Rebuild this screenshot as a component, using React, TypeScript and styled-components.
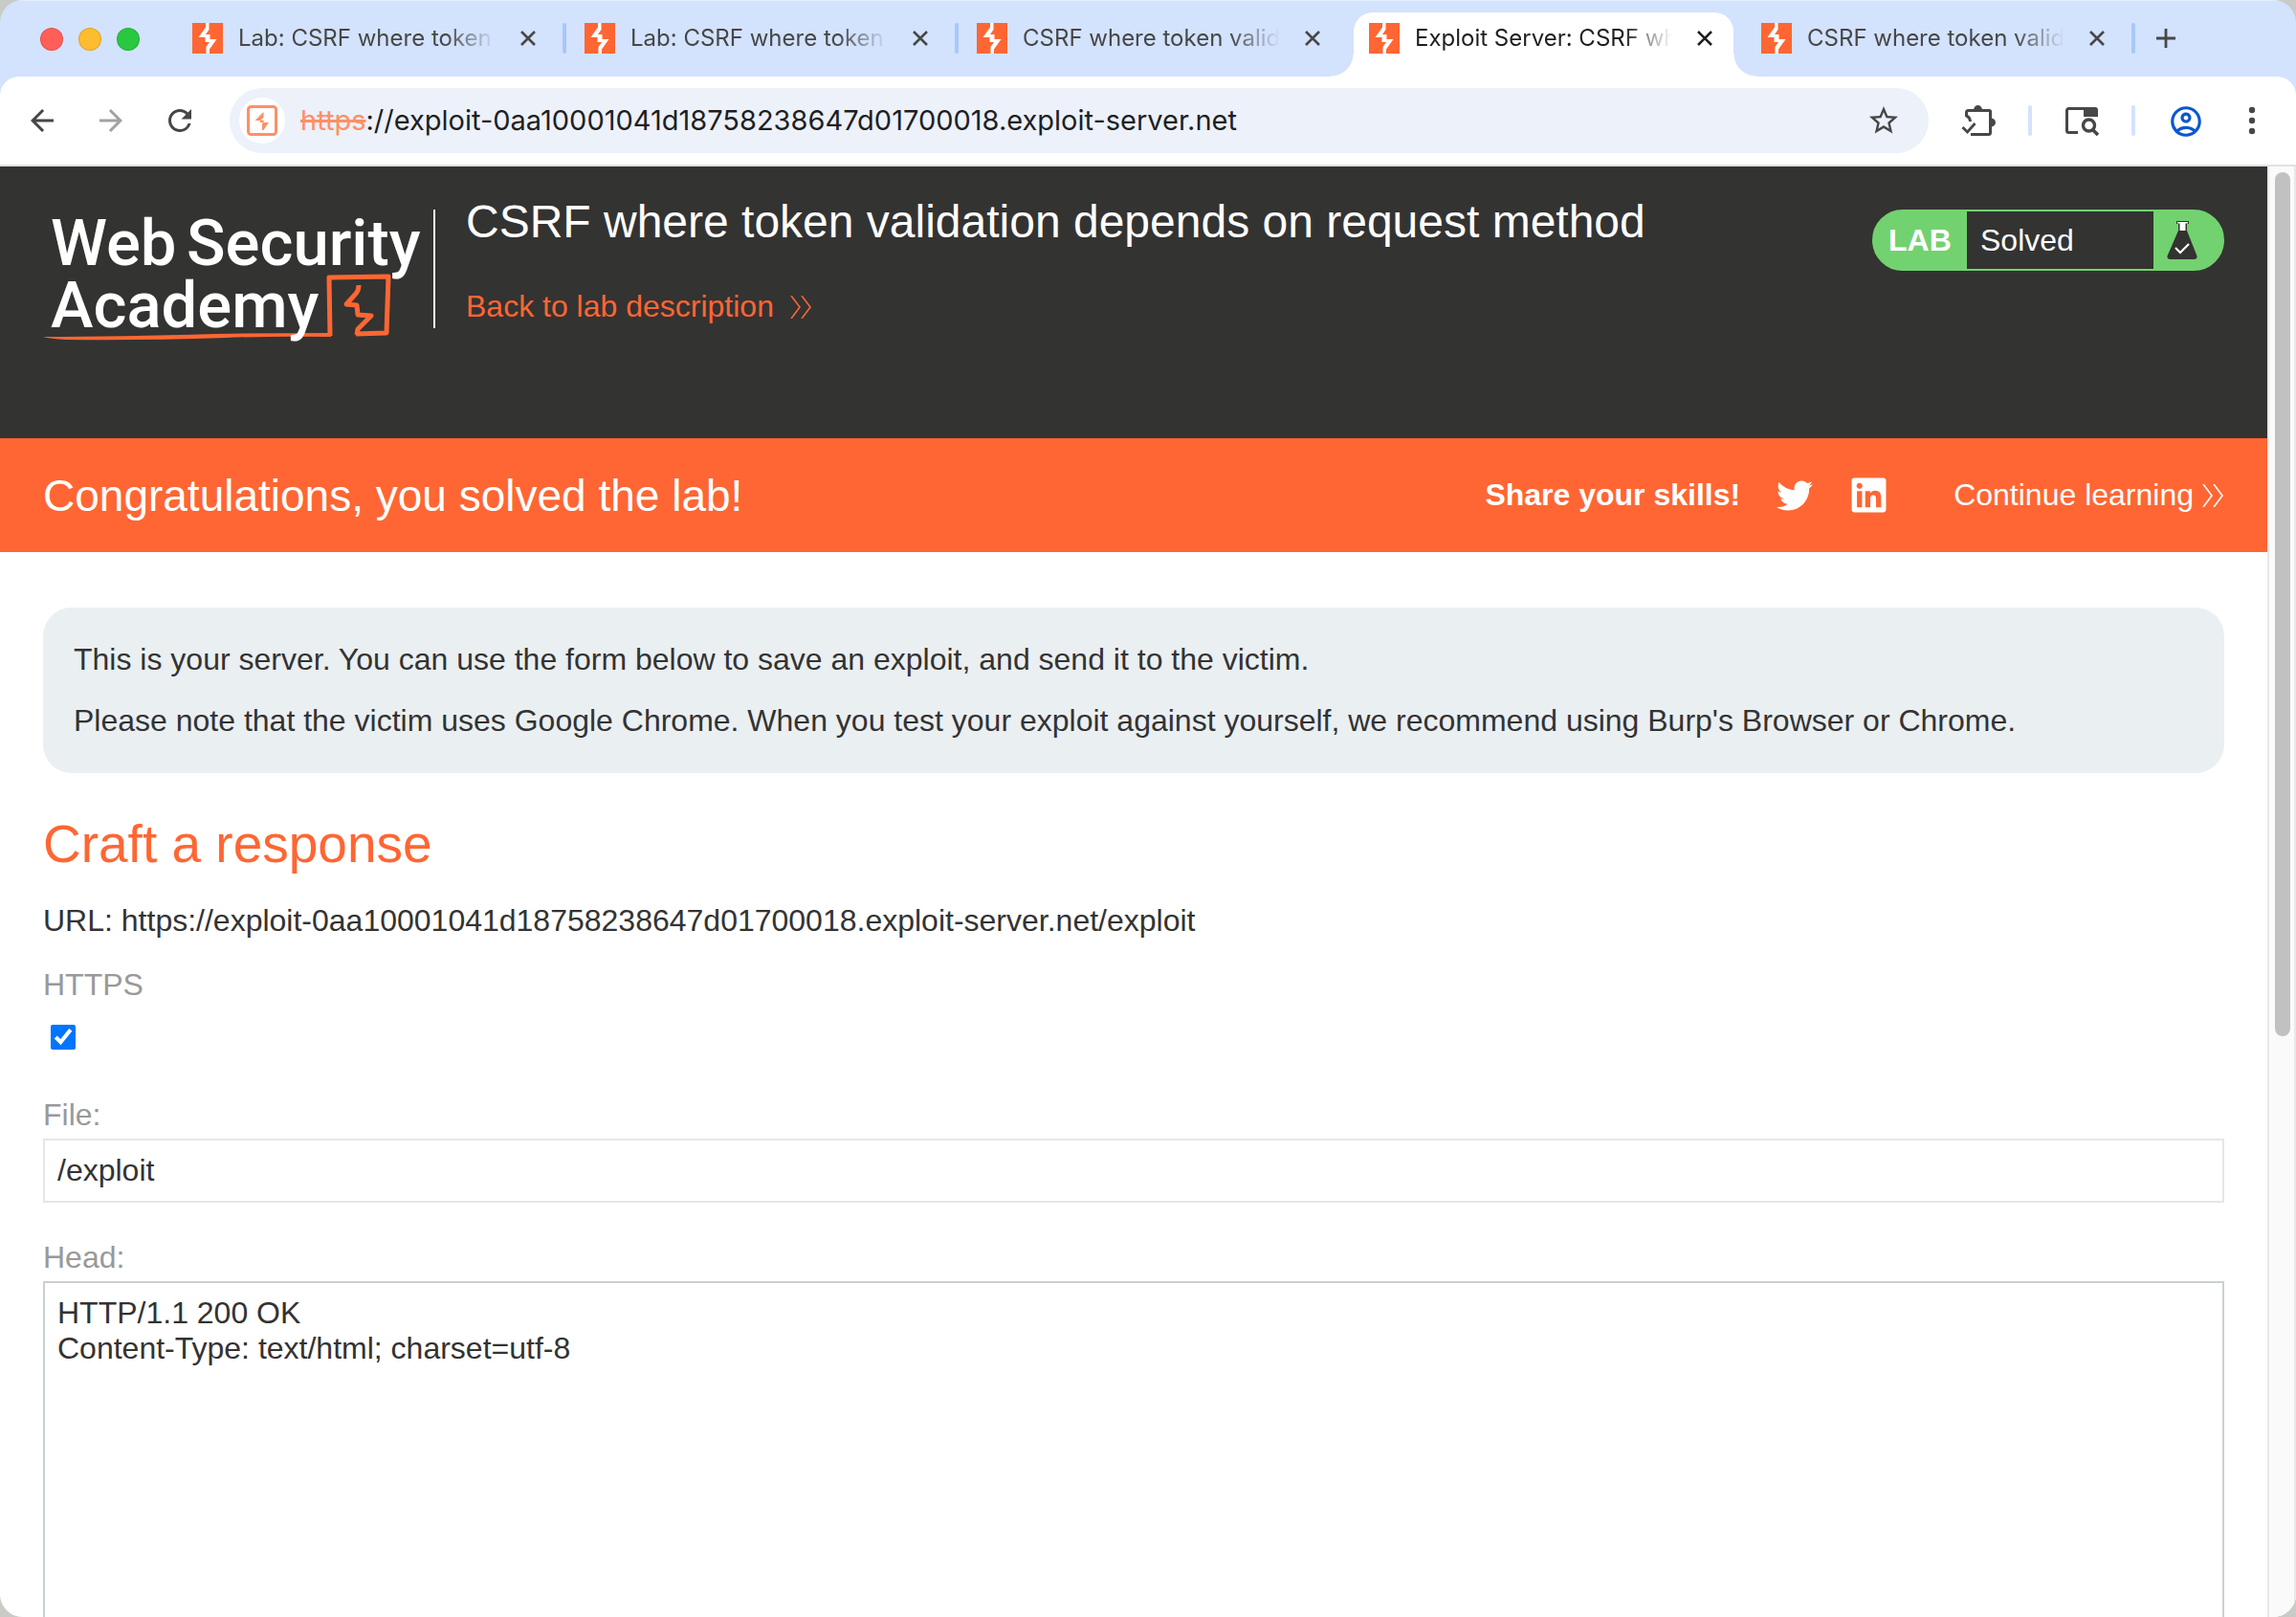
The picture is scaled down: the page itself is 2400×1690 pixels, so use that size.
import React from 'react';
import styled, { createGlobalStyle, css } from 'styled-components';
import { FaLinkedin, FaTwitter } from 'react-icons/fa';
import {
  MdArrowBack,
  MdArrowForward,
  MdOutlineAccountCircle,
  MdRefresh,
  MdStarBorder,
} from 'react-icons/md';

const color = {
  strip: '#d3e2fd',
  chromeInk: '#474747',
  orange: '#ff6633',
  dark: '#333332',
  green: '#72d26f',
  label: '#999999',
};

const pageFont = '"Liberation Sans", Arial, sans-serif';
const chromeFont = 'Inter, Roboto, sans-serif';

const GlobalStyle = createGlobalStyle`
  *, *::before, *::after { box-sizing: border-box; }
  body { margin: 0; background: #c9ccc6; }
  button { padding: 0; border: 0; background: none; color: inherit; font: inherit; }
  a { color: inherit; text-decoration: none; }
  h1, h2, p { margin: 0; font-weight: 400; }
  svg { display: block; flex: none; }
`;

/* Browser window */

const Window = styled.div`
  display: flex;
  flex-direction: column;
  height: 100vh;
  overflow: hidden;
  border-radius: 24px;
  background: ${color.strip};
`;

const TabStrip = styled.div`
  display: flex;
  align-items: stretch;
  flex: none;
  height: 80px;
  padding: 12px 16px 0 42px;
  border-top: 1px solid #e6eefc;
  color: ${color.chromeInk};
  font: 400 24px/32px ${chromeFont};
`;

const TrafficLights = styled.div`
  display: flex;
  gap: 16px;
  flex: none;
  width: 143px;
  padding-top: 16px;
`;

const Light = styled.button<{ $fill: string }>`
  width: 24px;
  height: 24px;
  border: 1px solid rgba(0, 0, 0, 0.12);
  border-radius: 50%;
  background: ${(p) => p.$fill};
`;

const TabSlot = styled.div`
  display: flex;
  flex: 0 1 410px;
  min-width: 0;
`;

const Tab = styled.div<{ $active?: boolean }>`
  position: relative;
  display: flex;
  align-items: flex-start;
  flex: 1;
  gap: 16px;
  min-width: 0;
  padding: 11px 16px 0;
  ${(p) =>
    p.$active &&
    css`
      border-radius: 20px 20px 0 0;
      background: #fff;
      color: #1f1f1f;
      &::before,
      &::after {
        content: '';
        position: absolute;
        bottom: 0;
        width: 24px;
        height: 24px;
      }
      &::before {
        right: 100%;
        background: radial-gradient(circle at 0 0, transparent 23px, #fff 24px);
      }
      &::after {
        left: 100%;
        background: radial-gradient(circle at 100% 0, transparent 23px, #fff 24px);
      }
    `}
`;

const TabTitle = styled.span`
  flex: 1;
  min-width: 0;
  overflow: hidden;
  white-space: nowrap;
  mask-image: linear-gradient(to right, #000 calc(100% - 56px), transparent calc(100% - 4px));
`;

const TabClose = styled.button`
  display: grid;
  place-items: center;
  width: 28px;
  height: 32px;
`;

const Divider = styled.span<{ $hidden?: boolean; $tone?: string }>`
  flex: none;
  width: 4px;
  height: 32px;
  border-radius: 2px;
  background: ${(p) => (p.$hidden ? 'transparent' : p.$tone || '#a8c7fa')};
`;

const TabDivider = styled(Divider)`
  margin: 11px 3px 0 6px;
`;

const NewTab = styled.button`
  display: grid;
  place-items: center;
  width: 58px;
  height: 54px;
`;

const Toolbar = styled.div`
  display: flex;
  align-items: center;
  flex: none;
  height: 94px;
  padding: 0 28px 0 26px;
  border-bottom: 2px solid #dfe2de;
  border-radius: 20px 20px 0 0;
  background: #fff;
  color: ${color.chromeInk};
`;

const NavButtons = styled.div`
  display: flex;
  gap: 36px;
  margin-right: 34px;
`;

const IconButton = styled.button<{ $faded?: boolean; $tone?: string }>`
  display: grid;
  place-items: center;
  width: 36px;
  height: 36px;
  color: ${(p) => p.$tone || 'inherit'};
  opacity: ${(p) => (p.$faded ? 0.5 : 1)};
`;

const AddressBar = styled.div`
  display: flex;
  align-items: center;
  flex: 1;
  gap: 16px;
  min-width: 0;
  height: 68px;
  padding: 0 29px 0 10px;
  border-radius: 34px;
  background: #ecf1fa;
`;

const SiteButton = styled.button`
  display: grid;
  place-items: center;
  width: 48px;
  height: 48px;
  border-radius: 50%;
  background: #fff;
`;

const Address = styled.div`
  flex: 1;
  overflow: hidden;
  color: #1f1f1f;
  font: 400 29px/36px ${chromeFont};
  white-space: nowrap;
`;

const Scheme = styled.s`
  color: #ff8f66;
  text-decoration-thickness: 3px;
`;

const ToolbarActions = styled.div`
  display: flex;
  align-items: center;
  gap: 34px;
  margin-left: 34px;
`;

/* Web page */

const Viewport = styled.div`
  display: flex;
  flex: 1;
  min-height: 0;
  overflow: hidden;
  background: #fff;
`;

const Page = styled.div`
  flex: 1;
  min-width: 0;
  overflow: hidden;
  color: ${color.dark};
  font: 400 32px/37px ${pageFont};
`;

const ScrollTrack = styled.div`
  flex: none;
  width: 30px;
  padding: 6px 4px 0 6px;
  border: solid #e8e8e8;
  border-width: 0 2px;
  background: #fafafa;
`;

const ScrollThumb = styled.div`
  width: 16px;
  height: calc(60% - 3px);
  border-radius: 8px;
  background: #c1c1c1;
`;

const LabHeader = styled.header`
  display: flex;
  align-items: flex-start;
  height: 284px;
  padding: 30px 45px 0;
  background: ${color.dark};
  color: #fff;
`;

const LogoLink = styled.a`
  flex: none;
  height: 124px;
  margin-top: 15px;
  border-right: 2px solid #fff;
`;

const LabTitle = styled.div`
  display: flex;
  flex-direction: column;
  align-items: flex-start;
  flex: 1;
  gap: 42px;
  padding-left: 32px;
`;

const Heading = styled.h1`
  font-size: 48px;
  line-height: 56px;
`;

const ArrowLink = styled.a<{ $gap: number; $tone: string }>`
  display: flex;
  align-items: center;
  gap: ${(p) => p.$gap}px;
  color: ${(p) => p.$tone};
`;

const LabStatus = styled.div`
  display: flex;
  flex: none;
  width: 368px;
  height: 64px;
  margin-top: 15px;
  overflow: hidden;
  border: 2px solid ${color.green};
  border-radius: 32px;
  background: ${color.green};
  line-height: 60px;
`;

const StatusTag = styled.strong`
  width: 97px;
  padding-left: 15px;
`;

const StatusText = styled.span`
  flex: 1;
  padding-left: 14px;
  background: ${color.dark};
`;

const StatusIcon = styled.span`
  display: grid;
  place-items: center;
  width: 72px;
  padding-right: 12px;
`;

const Banner = styled.section`
  display: flex;
  align-items: center;
  min-height: 119px;
  padding: 0 45px;
  background: ${color.orange};
  color: #fff;
`;

const BannerText = styled.p`
  flex: 1;
  font-size: 46px;
  line-height: 52px;
`;

const ShareRow = styled.div`
  display: flex;
  align-items: center;
  gap: 38px;
  margin-right: 68px;
`;

const Content = styled.main`
  padding: 58px 45px 0;
`;

const InfoBox = styled.section`
  display: grid;
  gap: 27px;
  padding: 36px 32px;
  border-radius: 30px;
  background: #eaeff2;
`;

const SectionTitle = styled.h2`
  margin: 42px 0 30px;
  color: ${color.orange};
  font-size: 55px;
  line-height: 64px;
`;

const Form = styled.form`
  display: flex;
  flex-direction: column;
  align-items: stretch;
  margin-top: 30px;
`;

const Label = styled.label`
  color: ${color.label};
`;

const Checkbox = styled.input`
  width: 26px;
  height: 26px;
  margin: 23px 8px 50px;
  accent-color: #0075ff;
`;

const fieldStyle = css`
  width: 100%;
  margin: 6px 0 39px;
  padding: 13px;
  background: #fff;
  color: ${color.dark};
  font: 400 32px/37px ${pageFont};
  outline: none;
`;

const TextField = styled.input`
  ${fieldStyle}
  height: 67px;
  border: 2px solid #e6e6e6;
`;

const TextArea = styled.textarea`
  ${fieldStyle}
  height: 480px;
  border: 2px solid #cad0d0;
  resize: none;
`;

/* Drawings */

const Favicon = () => (
  <svg width="32" height="32" viewBox="0 0 32 32" aria-hidden="true">
    <path fill={color.orange} d="M0 0h32v32H0z" />
    <path
      fill="#fff"
      d="M14 0h3.500v7L14 12h4.500v5h7L18 27.500V32h-3.500v-7L18 20h-4.500v-5h-7L14 4.500z"
    />
  </svg>
);

const SiteIcon = () => (
  <svg width="32" height="32" viewBox="0 0 32 32" aria-hidden="true">
    <rect x="1.500" y="1.500" width="29" height="29" rx="3" fill="none" stroke="#ff8f66" strokeWidth="3" />
    <path fill="#ff8f66" d="M17.500 7v6L14 15.500h3.500V18H23l-5.500 8h-1.500v-6.500l1-1.500h-3v-2H8.500z" />
  </svg>
);

const CloseIcon = () => (
  <svg width="16" height="16" viewBox="0 0 16 16" aria-hidden="true">
    <path d="M1 1l14 14M15 1L1 15" stroke="currentColor" strokeWidth="2.600" />
  </svg>
);

const PlusIcon = () => (
  <svg width="20" height="20" viewBox="0 0 20 20" aria-hidden="true">
    <path d="M10 0v20M0 10h20" stroke="currentColor" strokeWidth="2.800" />
  </svg>
);

const ExtensionIcon = () => (
  <svg width="36" height="32" viewBox="0 0 36 32" fill="none" aria-hidden="true">
    <path
      d="M5.500 12V7.500a2 2 0 0 1 2-2h22a1 1 0 0 1 1 1v22a2 2 0 0 1-2 2H10M5.500 11c2.500 1 3.800 3 4 6"
      stroke="currentColor"
      strokeWidth="3"
    />
    <path d="M13 5a4.500 5 0 0 1 9 0zM31 13.500a5 4.500 0 0 1 0 9z" fill="currentColor" />
    <path d="M1.500 23l5 5 8-9" stroke="currentColor" strokeWidth="2.800" />
  </svg>
);

const TabSearchIcon = () => (
  <svg width="36" height="32" viewBox="0 0 36 32" fill="none" aria-hidden="true">
    <path d="M14 28.500H4.500a2 2 0 0 1-2-2v-21a2 2 0 0 1 2-2H22" stroke="currentColor" strokeWidth="3" />
    <path d="M20 2h12a3 3 0 0 1 3 3v7H20z" fill="currentColor" />
    <circle cx="25.500" cy="21" r="6" stroke="currentColor" strokeWidth="3.400" />
    <path d="M29.500 25.500l5.500 5.500" stroke="currentColor" strokeWidth="3.600" />
  </svg>
);

const DotsIcon = () => (
  <svg width="8" height="30" viewBox="0 0 8 30" fill="currentColor" aria-hidden="true">
    <circle cx="4" cy="4" r="3.200" />
    <circle cx="4" cy="15" r="3.200" />
    <circle cx="4" cy="26" r="3.200" />
  </svg>
);

const DoubleChevron = () => (
  <svg width="24" height="24" viewBox="0 0 24 24" fill="none" aria-hidden="true">
    <path d="M2 0l9 12-9 12M13 0l9 12-9 12" stroke="currentColor" strokeWidth="1.600" />
  </svg>
);

const FlaskIcon = () => (
  <svg width="32" height="40" viewBox="0 0 32 40" aria-hidden="true">
    <path fill={color.dark} d="M10 0h13v3h-2v7l10.500 26.500q.5 3.500-3 3.500h-25Q0 40 .5 36.500L12 10V3h-2z" />
    <path fill="#fff" d="M11 1h11v1.500h-2.500V10h-6V2.500H11z" />
    <path d="M9 28l5 5 9-9" fill="none" stroke="#fff" strokeWidth="2.200" />
  </svg>
);

const AcademyLogo = () => (
  <svg width="408" height="142" viewBox="0 0 408 142" role="img" aria-label="Web Security Academy">
    <path fill={color.orange} d="M0 133q80 0 180-3 60-1 121-1v4q-60-1-110 1-90 3-166 2-18-1-25-3z" />
    <g fill="none" stroke={color.orange} strokeLinejoin="round">
      <path d="M300 132l-1-61 62-1-2 59-32 1" strokeWidth="5" />
      <path d="M330 79q0 6-4 10l-9 10 11 1 1 10 14 1-14 14-1 6" strokeWidth="5" />
    </g>
    <g fill="#fff" fontFamily="Roboto, sans-serif" fontWeight="500" fontSize="67">
      <text x="8" y="58">Web</text>
      <text x="150" y="58">Security</text>
      <text x="8" y="123">Academy</text>
    </g>
  </svg>
);

const tabs = [
  { title: 'Lab: CSRF where token' },
  { title: 'Lab: CSRF where token' },
  { title: 'CSRF where token valida', noDivider: true },
  { title: 'Exploit Server: CSRF wh', active: true, noDivider: true },
  { title: 'CSRF where token valida' },
];

export default function App() {
  return (
    <>
      <GlobalStyle />
      <Window>
        <TabStrip>
          <TrafficLights>
            <Light $fill="#ff5f57" aria-label="Close window" />
            <Light $fill="#febc2e" aria-label="Minimize window" />
            <Light $fill="#28c840" aria-label="Zoom window" />
          </TrafficLights>
          {tabs.map((tab, i) => (
            <TabSlot key={i}>
              <Tab $active={tab.active}>
                <Favicon />
                <TabTitle>{tab.title}</TabTitle>
                <TabClose aria-label="Close tab">
                  <CloseIcon />
                </TabClose>
              </Tab>
              <TabDivider $hidden={tab.noDivider} />
            </TabSlot>
          ))}
          <NewTab aria-label="New tab">
            <PlusIcon />
          </NewTab>
        </TabStrip>

        <Toolbar>
          <NavButtons>
            <IconButton aria-label="Back"><MdArrowBack size={36} /></IconButton>
            <IconButton aria-label="Forward" $faded><MdArrowForward size={36} /></IconButton>
            <IconButton aria-label="Reload"><MdRefresh size={36} /></IconButton>
          </NavButtons>
          <AddressBar>
            <SiteButton aria-label="Site information"><SiteIcon /></SiteButton>
            <Address>
              <Scheme>https</Scheme>://exploit-0aa10001041d18758238647d01700018.exploit-server.net
            </Address>
            <IconButton aria-label="Bookmark this tab"><MdStarBorder size={36} /></IconButton>
          </AddressBar>
          <ToolbarActions>
            <IconButton aria-label="Extensions"><ExtensionIcon /></IconButton>
            <Divider $tone={color.strip} />
            <IconButton aria-label="Search tabs"><TabSearchIcon /></IconButton>
            <Divider $tone={color.strip} />
            <IconButton aria-label="Profile" $tone="#0b57d0"><MdOutlineAccountCircle size={38} /></IconButton>
            <IconButton aria-label="Menu"><DotsIcon /></IconButton>
          </ToolbarActions>
        </Toolbar>

        <Viewport>
          <Page>
            <LabHeader>
              <LogoLink href="#"><AcademyLogo /></LogoLink>
              <LabTitle>
                <Heading>CSRF where token validation depends on request method</Heading>
                <ArrowLink href="#" $gap={16} $tone={color.orange}>
                  Back to lab description <DoubleChevron />
                </ArrowLink>
              </LabTitle>
              <LabStatus>
                <StatusTag>LAB</StatusTag>
                <StatusText>Solved</StatusText>
                <StatusIcon><FlaskIcon /></StatusIcon>
              </LabStatus>
            </LabHeader>

            <Banner>
              <BannerText>Congratulations, you solved the lab!</BannerText>
              <ShareRow>
                <strong>Share your skills!</strong>
                <a href="#" aria-label="Share on Twitter"><FaTwitter size={38} /></a>
                <a href="#" aria-label="Share on LinkedIn"><FaLinkedin size={41} /></a>
              </ShareRow>
              <ArrowLink href="#" $gap={8} $tone="#fff">
                Continue learning <DoubleChevron />
              </ArrowLink>
            </Banner>

            <Content>
              <InfoBox>
                <p>This is your server. You can use the form below to save an exploit, and send it to the victim.</p>
                <p>
                  Please note that the victim uses Google Chrome. When you test your exploit against yourself, we
                  recommend using Burp's Browser or Chrome.
                </p>
              </InfoBox>
              <SectionTitle>Craft a response</SectionTitle>
              <p>URL: https://exploit-0aa10001041d18758238647d01700018.exploit-server.net/exploit</p>
              <Form>
                <Label htmlFor="https">HTTPS</Label>
                <Checkbox id="https" type="checkbox" defaultChecked />
                <Label htmlFor="file">File:</Label>
                <TextField id="file" type="text" defaultValue="/exploit" />
                <Label htmlFor="head">Head:</Label>
                <TextArea id="head" defaultValue={'HTTP/1.1 200 OK\nContent-Type: text/html; charset=utf-8'} />
              </Form>
            </Content>
          </Page>
          <ScrollTrack>
            <ScrollThumb />
          </ScrollTrack>
        </Viewport>
      </Window>
    </>
  );
}
